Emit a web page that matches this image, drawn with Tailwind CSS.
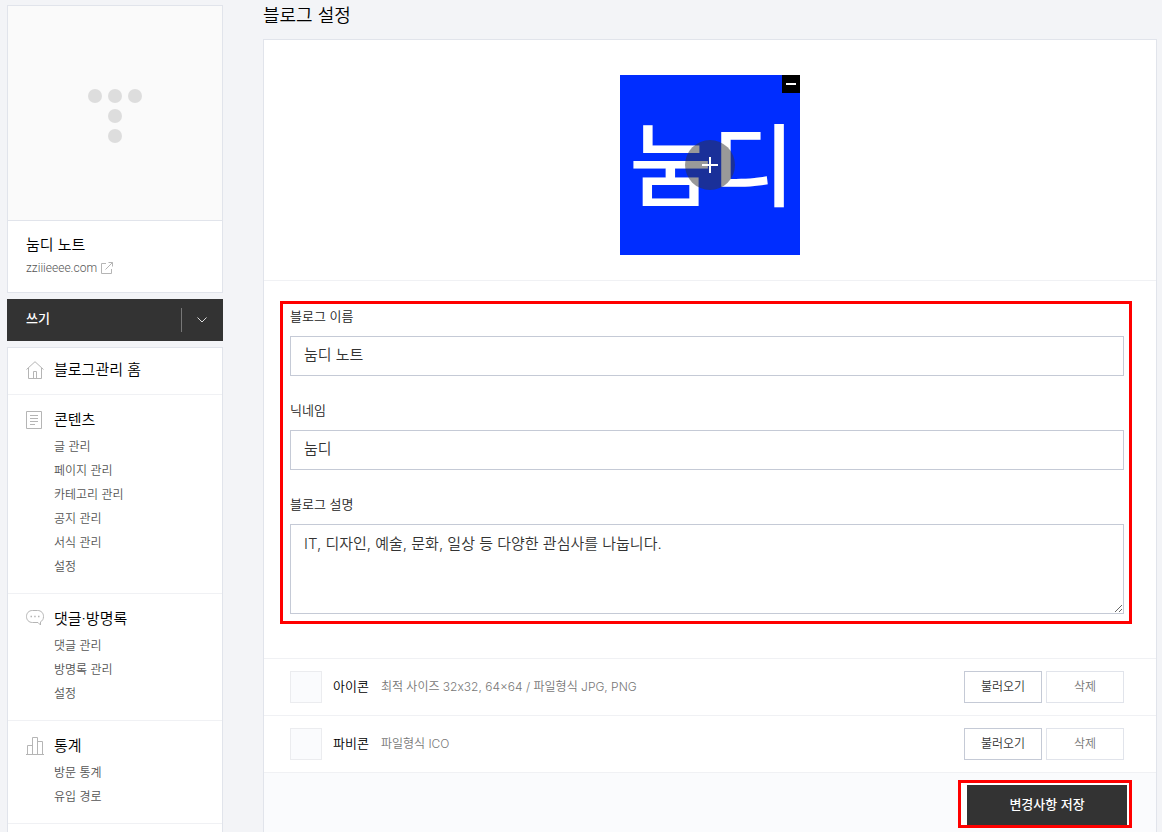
<!DOCTYPE html>
<html lang="ko">
<head>
    <meta charset="UTF-8">
    <meta name="viewport" content="width=device-width, initial-scale=1.0">
    <title>블로그 설정</title>
    <script src="https://cdn.jsdelivr.net/npm/@tailwindcss/browser@4"></script>
</head>

<body class="bg-[#f3f4f7] font-['Inter','Noto_Sans_CJK_KR',sans-serif] font-[350] text-black">
    <div class="min-h-screen flex gap-10 pl-[7px] pr-[5px]">

        <!-- Sidebar -->
        <aside class="w-[216px] shrink-0 flex flex-col pt-[5px]">
            <div class="bg-white border border-[#e1e4eb]">
                <div class="h-[215px] bg-[#fafafa] border-b border-[#e1e4eb] flex items-center justify-center">
                    <svg class="w-[54px] h-[54px] mt-1.5" viewBox="0 0 54 54" fill="#ddd">
                        <circle cx="7" cy="7" r="7"/>
                        <circle cx="27" cy="7" r="7"/>
                        <circle cx="47" cy="7" r="7"/>
                        <circle cx="27" cy="27" r="7"/>
                        <circle cx="27" cy="47" r="7"/>
                    </svg>
                </div>
                <div class="h-[71px] pl-[18px] pt-3">
                    <p class="text-[15px] leading-6">눔디 노트</p>
                    <a href="#" class="flex items-center gap-1 font-['Roboto',sans-serif] font-light text-xs leading-[22px] text-[#555]">
                        zziiieeee.com
                        <svg class="w-3 h-3" viewBox="0 0 12 12" fill="none" stroke="#b5b5b5">
                            <path d="M5 1.500H.5v10h10V7M4.500 7.500l7-7M7.500 .5h4v4"/>
                        </svg>
                    </a>
                </div>
            </div>

            <div class="mt-1.5 h-[42px] bg-[#333] flex items-center text-white">
                <button type="button" class="flex-1 h-full pl-[19px] pb-0.5 text-left text-[13px] font-medium">쓰기</button>
                <button type="button" class="w-[42px] h-6 border-l border-[#777] pr-0.5 flex items-center justify-center" aria-label="더보기">
                    <svg class="w-2.5 h-1.5" viewBox="0 0 10 6" fill="none" stroke="#ddd">
                        <path d="M.5 .5L5 5L9.500 .5"/>
                    </svg>
                </button>
            </div>

            <nav class="mt-1.5 flex-1 bg-white border border-b-0 border-[#e1e4eb] text-xs text-[#555]">
                <div class="h-[47px] pl-[18px] pb-0.5 border-b border-[#f0f1f4]">
                    <a href="#" class="h-full flex items-center gap-2.5 text-[15px] text-black">
                        <svg class="w-[18px] h-[18px]" viewBox="0 0 18 18" fill="none" stroke="#b5b5b5">
                            <path d="M.5 8.500L9 .7l8.500 7.800M2.500 7v10.500h13V7M7.500 17.500v-7h3v7"/>
                        </svg>
                        블로그관리 홈
                    </a>
                </div>

                <div class="pl-[18px] pt-[13px] pb-3.5 border-b border-[#f0f1f4]">
                    <a href="#" class="flex items-center gap-2.5 text-[15px] leading-6 text-black">
                        <svg class="w-[18px] h-[18px]" viewBox="0 0 18 18" fill="none" stroke="#b5b5b5">
                            <path d="M.5 .5h15v17H.5zM4 4.500h8M4 7.500h8M4 10.500h8M4 13.500h5"/>
                        </svg>
                        콘텐츠
                    </a>
                    <ul class="mt-[3px] pl-7 leading-6">
                        <li><a href="#">글 관리</a></li>
                        <li><a href="#">페이지 관리</a></li>
                        <li><a href="#">카테고리 관리</a></li>
                        <li><a href="#">공지 관리</a></li>
                        <li><a href="#">서식 관리</a></li>
                        <li><a href="#">설정</a></li>
                    </ul>
                </div>

                <div class="pl-[18px] pt-[13px] pb-3.5 border-b border-[#f0f1f4]">
                    <a href="#" class="flex items-center gap-2.5 text-[15px] leading-6 text-black">
                        <svg class="w-[18px] h-[18px]" viewBox="0 0 18 18" fill="none" stroke="#b5b5b5">
                            <path d="M6.500 .5h5c3.800 0 6 2.700 6 6 0 2.500-1 4.300-3 5.300v3.200l-2.500-2.500H6.500C2.700 12.500.5 9.800.5 6.500s2.200-6 6-6z"/>
                            <path d="M4.500 6.500H6M8.200 6.500h1.500M12 6.500h1.500" stroke-width="1.500"/>
                        </svg>
                        댓글·방명록
                    </a>
                    <ul class="mt-[3px] pl-7 leading-6">
                        <li><a href="#">댓글 관리</a></li>
                        <li><a href="#">방명록 관리</a></li>
                        <li><a href="#">설정</a></li>
                    </ul>
                </div>

                <div class="pl-[18px] pt-[13px] pb-3.5 border-b border-[#f0f1f4]">
                    <a href="#" class="flex items-center gap-2.5 text-[15px] leading-6 text-black">
                        <svg class="w-[18px] h-[18px]" viewBox="0 0 18 18" fill="none" stroke="#b5b5b5">
                            <path d="M0 17.500h18M1.500 17.500v-9h5M6.500 17.500V.5h5v17M11.500 4.500h5v13"/>
                        </svg>
                        통계
                    </a>
                    <ul class="mt-[3px] pl-7 leading-6">
                        <li><a href="#">방문 통계</a></li>
                        <li><a href="#">유입 경로</a></li>
                    </ul>
                </div>
            </nav>
        </aside>

        <!-- Settings -->
        <main class="flex-1 min-w-0 flex flex-col">
            <h1 class="h-[39px] pt-1 text-lg leading-6 font-[350]">블로그 설정</h1>

            <form class="flex-1 flex flex-col bg-white border border-b-0 border-[#e1e4eb]">
                <div class="pt-[35px] pb-[25px] border-b border-[#f0f1f4] flex justify-center">
                    <div class="relative w-[180px] h-[180px] bg-[#002dff] flex items-center justify-center">
                        <span class="pt-1 pl-1 text-[90px] leading-none font-medium text-white whitespace-nowrap">눔디</span>
                        <button type="button" class="absolute inset-0 m-auto w-[50px] h-[50px] rounded-full bg-[#333]/50 flex items-center justify-center" aria-label="이미지 변경">
                            <svg class="w-4 h-4" viewBox="0 0 16 16" stroke="#fff" stroke-width="2">
                                <path d="M8 0v16M0 8h16"/>
                            </svg>
                        </button>
                        <button type="button" class="absolute top-0 right-0 w-[18px] h-[18px] bg-black flex items-center justify-center" aria-label="이미지 삭제">
                            <span class="w-2.5 h-0.5 bg-white"></span>
                        </button>
                    </div>
                </div>

                <div class="pt-5 pb-[34px] pl-4 pr-6 border-b border-[#f0f1f4]">
                    <div class="border-3 border-[#f00] pl-[7px] pr-[5px] pb-[7px] text-[13px] text-[#222]">
                        <label for="blogName" class="block h-8 leading-6">블로그 이름</label>
                        <input type="text" id="blogName" value="눔디 노트" class="block w-full h-10 px-[13px] pb-1.5 border border-[#c5cad6] text-[15px] text-[#333]">

                        <label for="nickname" class="block mt-[22px] h-8 leading-6">닉네임</label>
                        <input type="text" id="nickname" value="눔디" class="block w-full h-10 px-[13px] pb-1.5 border border-[#c5cad6] text-[15px] text-[#333]">

                        <label for="blogDesc" class="block mt-[22px] h-8 leading-6">블로그 설명</label>
                        <textarea id="blogDesc" class="block w-full h-[90px] px-[13px] py-[7px] border border-[#c5cad6] text-[15px] leading-6 text-[#333]">IT, 디자인, 예술, 문화, 일상 등 다양한 관심사를 나눕니다.</textarea>
                    </div>
                </div>

                <div class="h-[57px] pl-[26px] pr-8 border-b border-[#f0f1f4] flex items-center text-xs">
                    <span class="w-8 h-8 bg-[#fafbfd] border border-[#ebecef]"></span>
                    <span class="ml-[11px] text-[13px]">아이콘</span>
                    <span class="ml-3 text-[#777]">최적 사이즈 32x32, 64×64 / 파일형식 JPG, PNG</span>
                    <div class="ml-auto flex gap-1">
                        <button type="button" class="w-[78px] h-8 border border-[#c5cad6] text-[#333]">불러오기</button>
                        <button type="button" class="w-[78px] h-8 border border-[#e1e4eb] text-[#777]">삭제</button>
                    </div>
                </div>

                <div class="h-[57px] pl-[26px] pr-8 border-b border-[#f0f1f4] flex items-center text-xs">
                    <span class="w-8 h-8 bg-[#fafbfd] border border-[#ebecef]"></span>
                    <span class="ml-[11px] text-[13px]">파비콘</span>
                    <span class="ml-3 text-[#777]">파일형식 ICO</span>
                    <div class="ml-auto flex gap-1">
                        <button type="button" class="w-[78px] h-8 border border-[#c5cad6] text-[#333]">불러오기</button>
                        <button type="button" class="w-[78px] h-8 border border-[#e1e4eb] text-[#777]">삭제</button>
                    </div>
                </div>

                <div class="flex-1 pt-[7px] pr-6 bg-[#fafbfd] flex justify-end items-start">
                    <div class="border-3 border-[#f00] bg-white pt-0.5 pl-1.5 pr-0.5">
                        <button type="submit" class="block w-40 h-10 bg-[#333] text-[13px] font-medium text-white">변경사항 저장</button>
                    </div>
                </div>
            </form>
        </main>
    </div>
</body>
</html>
